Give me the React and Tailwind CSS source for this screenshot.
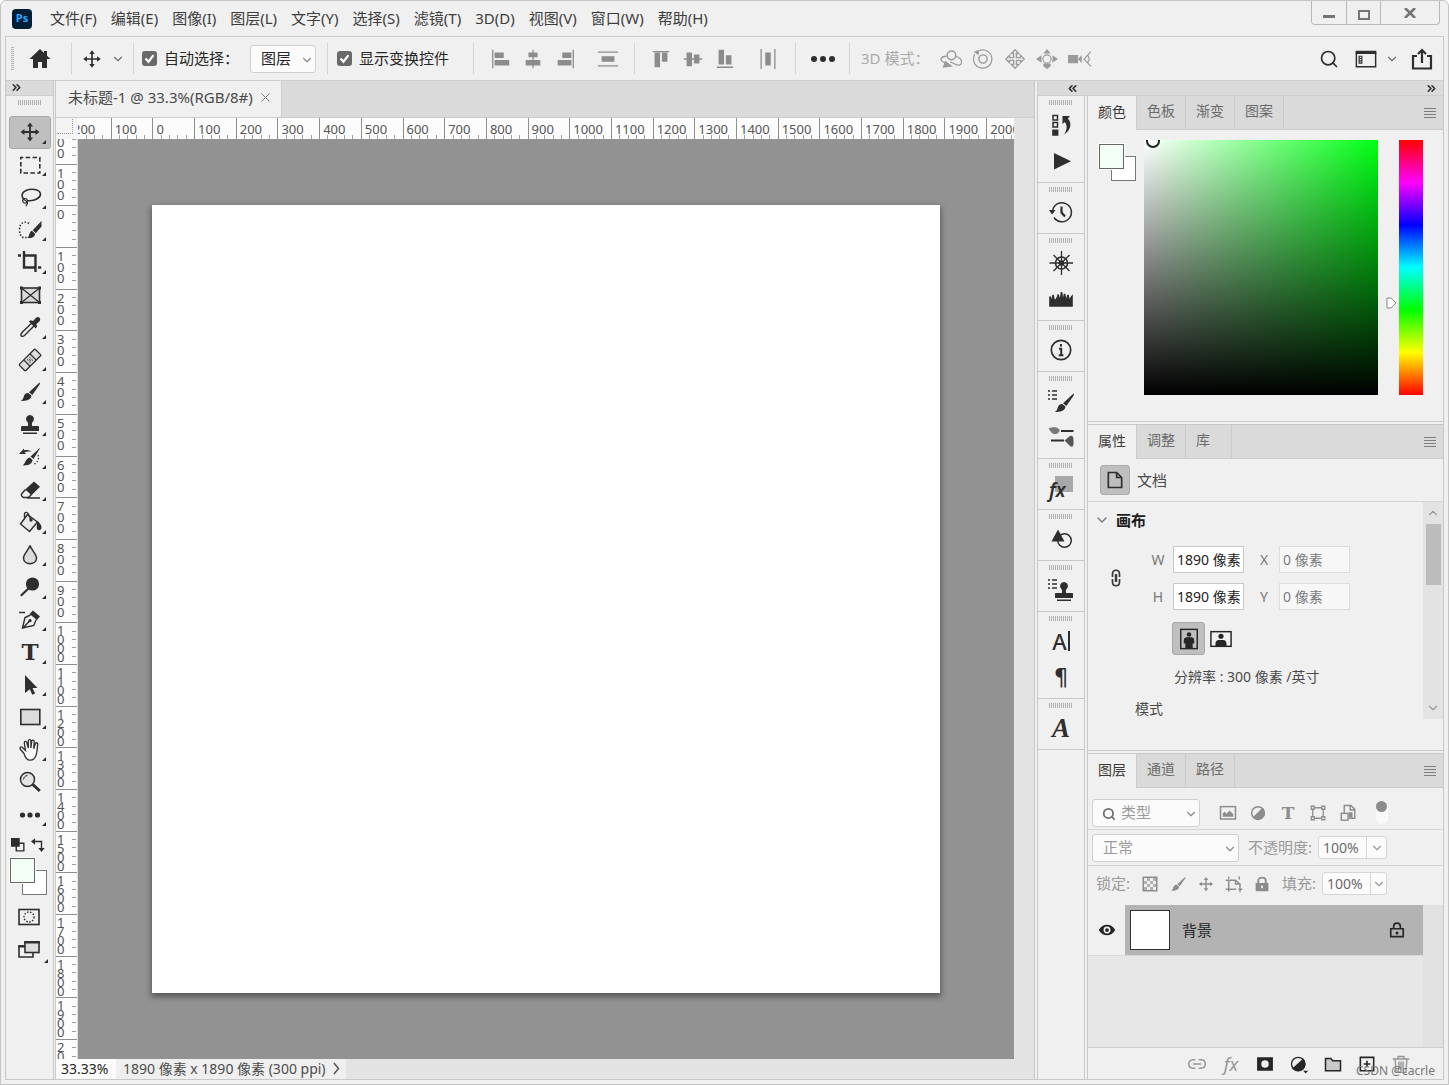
import { ChevronDown, ChevronUp, ChevronsLeft, ChevronsRight, Search } from "lucide-react";
import clsx from "clsx";

const MENUS = [
  "文件(F)", "编辑(E)", "图像(I)", "图层(L)", "文字(Y)", "选择(S)",
  "滤镜(T)", "3D(D)", "视图(V)", "窗口(W)", "帮助(H)",
];

// Size of 100 document pixels on screen at the current zoom
const UNIT = 788 / 18.9;

const range = (from, to) => {
  const out = [];
  for (let v = from; v <= to; v += 100) out.push(Math.abs(v));
  return out;
};

const Icon = ({ size = 24, className, children }) => (
  <svg
    width={size}
    height={size}
    viewBox="0 0 24 24"
    fill="none"
    stroke="currentColor"
    strokeWidth="1.6"
    className={clsx("shrink-0", className)}
    aria-hidden="true"
  >
    {children}
  </svg>
);

const MoveIcon = ({ size }) => (
  <Icon size={size}>
    <path d="M12 4v16M4 12h16" strokeWidth="1.8" />
    <path d="M12 2.5 15 6.5H9zM12 21.5l3-4H9zM2.5 12l4-3v6zM21.5 12l-4-3v6z" fill="currentColor" stroke="none" />
  </Icon>
);

const Brush = () => (
  <>
    <path d="M21.5 2.5c.8.5.3 1.500-.2 2.400L14.300 15l-3.200-2.700z" fill="currentColor" stroke="none" />
    <path d="M10.300 13l3.100 2.600c.2 3-3.300 5.800-10.600 5.400 2.900-1.500 2.300-3.400 3.600-5.900.8-1.600 2.300-2.300 3.900-2.100z" fill="currentColor" stroke="none" />
  </>
);

const Stamp = () => (
  <path
    d="M12 2a4 4 0 0 1 2.600 7c-.8.8-.9 2-.5 4H20a1 1 0 0 1 1 1v4H3v-4a1 1 0 0 1 1-1h5.900c.4-2 .3-3.200-.5-4A4 4 0 0 1 12 2zM5 19.400h14v1.700H5z"
    fill="currentColor"
    stroke="none"
  />
);

const TOOLS = [
  { name: "移动工具", icon: <MoveIcon /> },
  {
    name: "矩形选框工具",
    icon: <Icon><rect x="2.8" y="4.5" width="19" height="15.5" strokeDasharray="4.5 2.4" strokeDashoffset="2" /></Icon>,
  },
  {
    name: "套索工具",
    icon: (
      <Icon>
        <path d="M6.3 14.7C2.6 11.5 3.6 7.6 8 5.6c4.9-2.2 13-1.6 14.3 2.6 1.2 4.6-6.2 8.4-13 7.3" />
        <circle cx="7" cy="15.8" r="2.3" strokeWidth="1.2" />
        <path d="M5 14l4 2.6c1 1.3.3 3-1.3 4.4" strokeWidth="1.2" />
      </Icon>
    ),
  },
  {
    name: "快速选择工具",
    icon: (
      <Icon>
        <path d="M11 5.5C6 2.5 1.5 5 1.5 12s4.5 9.5 8 6.5" strokeDasharray="1.4 1.8" />
        <path d="M23.5 3v5.500L17.800 15.200l-3.100-3z" fill="currentColor" stroke="none" />
        <path d="M14 12.800l3.200 3.100c-.7 3.400-4 4.300-8 4.100 2.500-1.200 1.500-6 4.800-7.200z" fill="currentColor" stroke="none" />
      </Icon>
    ),
  },
  {
    name: "裁剪工具",
    icon: <Icon><path d="M0 5.5h3M6 1v16.5h11M7 5.5h10.5V22M20 17.5h3.2" strokeWidth="2.4" /></Icon>,
  },
  {
    name: "图框工具",
    flat: true,
    icon: (
      <Icon>
        <rect x="3.5" y="5" width="18" height="14.5" fill="#d9d9d9" />
        <path d="M3.5 5l18 14.5M21.5 5l-18 14.5" strokeWidth="1.3" />
        <path d="M2 3.5h3v3H2zM20 3.5h3v3h-3zM2 18h3v3H2zM20 18h3v3h-3z" fill="currentColor" stroke="none" />
      </Icon>
    ),
  },
  {
    name: "吸管工具",
    icon: (
      <Icon>
        <path d="M13.6 8.2 4 17.5c-1 1.2-1.3 2.8-.7 3.4s2.3.3 3.4-.7l9.5-9.5" strokeWidth="1.4" />
        <path d="M10.800 6.500l2-1.200 2.300.7 2.700-3c1.200-1.200 2.700-1.200 3.700-.2s1 2.600-.2 3.800l-3 2.600.8 2.300-1.300 2z" fill="currentColor" stroke="none" />
      </Icon>
    ),
  },
  {
    name: "污点修复画笔工具",
    icon: (
      <Icon>
        <g transform="rotate(-45 12 12)" strokeWidth="1.3">
          <rect x="0.8" y="7.5" width="22.5" height="9" rx="1.2" fill="#dedede" />
          <path d="M7.7 7.5v9M16.3 7.5v9" />
          <path d="M10 10.500h1M13 10.500h1M10 13.500h1M13 13.500h1M11.500 12h1" strokeWidth="1.5" />
        </g>
      </Icon>
    ),
  },
  { name: "画笔工具", icon: <Icon><Brush /></Icon> },
  { name: "仿制图章工具", icon: <Icon><Stamp /></Icon> },
  {
    name: "历史记录画笔工具",
    icon: (
      <Icon>
        <path d="M22.500 2.500L15.500 14l-3-2.400z" fill="currentColor" stroke="none" />
        <path d="M11.800 12.600l2.800 2.400c-.4 3.800-4 5.800-9.800 5.400 2.600-1.400 2.400-6.900 7-7.800z" fill="currentColor" stroke="none" />
        <path d="M1 9l5-5.500v1.700c3-.4 5.500 0 7.500 1.500-2.600-.4-4.800-.3-7 .3L8 9z" fill="currentColor" stroke="none" />
        <path d="M20 10c1.500 4-.5 7-3.500 9" strokeDasharray="1.3 1.8" strokeWidth="1.3" />
      </Icon>
    ),
  },
  {
    name: "橡皮擦工具",
    icon: (
      <Icon>
        <path d="M16 3.500l6 5.200-8.500 8.500-6.300-5.700z" fill="currentColor" stroke="none" />
        <path d="M7.500 11.500l-3.600 4c-.8 1-.8 1.900 0 2.700l1.500 1.300h5l3-3M9 20h13" strokeWidth="1.5" />
      </Icon>
    ),
  },
  {
    name: "油漆桶工具",
    icon: (
      <Icon>
        <path d="M9.5 4.5L2.5 14l9 7.5 8-9.5z" fill="#e8e8e8" strokeWidth="1.4" />
        <path d="M13 10L10 3.500C9.200 1.800 6.500 2 6.500 4v4" strokeWidth="1.4" />
        <circle cx="13" cy="10" r="1.7" fill="currentColor" stroke="none" />
        <path d="M18 10.500c1.500.5 2.500 1 3.500 2.500 1 1.200 2 2.500 2 4.500 0 3.500-4.800 3.500-4.800.3 0-2 .8-4-.7-7.300z" fill="currentColor" stroke="none" />
      </Icon>
    ),
  },
  {
    name: "模糊工具",
    icon: <Icon><path d="M12 2.5c1 4 6.500 8.500 6.500 12.500 0 7.500-13 7.500-13 0 0-4 5.500-8.500 6.500-12.500z" fill="#dcdcdc" strokeWidth="1.5" /></Icon>,
  },
  {
    name: "减淡工具",
    icon: (
      <Icon>
        <circle cx="14.5" cy="9" r="6.6" fill="currentColor" stroke="none" />
        <path d="M10.5 13.5L2.8 20.8" strokeWidth="2.2" />
      </Icon>
    ),
  },
  {
    name: "钢笔工具",
    icon: (
      <Icon>
        <path d="M15 2.5l7 6-3 3.500-7.500-6z" fill="currentColor" stroke="none" />
        <path d="M12.5 7L7 9.500 4.500 20l11.300-2.500 2.400-6M5 20l6.500-7" strokeWidth="1.4" />
        <circle cx="12" cy="12.7" r="1.6" fill="currentColor" stroke="none" />
        <path d="M1 4.5h6" strokeWidth="1.4" />
      </Icon>
    ),
  },
  {
    name: "横排文字工具",
    icon: <span className="w-6 pl-px text-center font-['DejaVu_Serif','Noto_Sans',serif] text-[23px] leading-6 font-bold">T</span>,
  },
  {
    name: "路径选择工具",
    icon: <Icon><path d="M7 2l12.5 13h-5l2.600 5.500-2.800 1.300-2.500-5.500L7 20z" fill="currentColor" stroke="none" /></Icon>,
  },
  {
    name: "矩形工具",
    icon: <Icon><rect x="2.8" y="4.5" width="19" height="15" fill="#dcdcdc" /></Icon>,
  },
  {
    name: "抓手工具",
    icon: (
      <Icon>
        <path
          d="M5 15.500L1.200 11c-1-1.500.8-2.800 2-1.700L6.500 12.500 5.300 5c-.2-1.900 2.100-2.100 2.500-.5L9.300 10V3c0-1.800 2.600-1.800 2.600 0v7l.8-6.700c.3-1.700 2.600-1.300 2.500.4l-.5 7 1.700-5c.6-1.600 2.700-.9 2.400.7-.7 3.500-.5 6.600-1.500 10-1 4-3 5.800-6.300 5.800-4 0-5-3.500-6-6.700z"
          fill="#f8f8f8"
          strokeWidth="1.3"
          transform="translate(1 0)"
        />
      </Icon>
    ),
  },
  {
    name: "缩放工具",
    flat: true,
    icon: (
      <Icon>
        <circle cx="9.5" cy="9.5" r="7" strokeWidth="1.5" fill="#e4e4e4" />
        <path d="M5.5 9.5c0-2 1.800-4 4-4" strokeWidth="1" />
        <path d="M14.8 14.5l7 6.500" strokeWidth="3" />
      </Icon>
    ),
  },
  {
    name: "编辑工具栏",
    icon: (
      <Icon>
        <g fill="currentColor" stroke="none">
          <circle cx="4.5" cy="12" r="2.6" /><circle cx="12" cy="12" r="2.6" /><circle cx="19.5" cy="12" r="2.6" />
        </g>
      </Icon>
    ),
  },
];

const ListDots = () => (
  <path d="M-1 2h2M-1 6h2M-1 10h2M3 2h5M3 6h5M3 10h5" strokeWidth="1.5" />
);

const DOCK_GROUPS = [
  [
    {
      name: "历史记录",
      icon: (
        <Icon>
          <path d="M4 2.5h4.500V7H4zM4 9.500h4.500V14H4z" strokeWidth="1.5" />
          <path d="M3.200 16.500h6.200v6.200H3.200zM13.500 3h7.500l-2.200 2.600c4.500 4.400 3.200 12-3.800 15.900 3.200-4.500 3.500-9 .8-12.500L13.500 11z" fill="currentColor" stroke="none" />
        </Icon>
      ),
    },
    { name: "动作", icon: <Icon><path d="M5 4l17 8.2L5 20.500z" fill="currentColor" stroke="none" /></Icon> },
  ],
  [
    {
      name: "版本历史记录",
      icon: (
        <Icon className="overflow-visible">
          <path d="M3.5 11A9.500 9.500 0 1 1 5 17.500" strokeWidth="1.5" />
          <path d="M0 10h6.500L3 14.500z" fill="currentColor" stroke="none" />
          <path d="M12.500 6.500v6l3.500 4" strokeWidth="2.2" />
        </Icon>
      ),
    },
  ],
  [
    {
      name: "导航器",
      icon: (
        <Icon>
          <circle cx="12.500" cy="12" r="6" /><circle cx="12.500" cy="12" r="2" fill="currentColor" />
          <path d="M12.500 0v24M.5 12h24M4.500 4l16 16M20.500 4l-16 16" strokeWidth="1.3" />
        </Icon>
      ),
    },
    {
      name: "直方图",
      icon: (
        <Icon>
          <path d="M1 19V9.500l1.200 4h1L4 8l1 5h2l1-2 1 2V7.500l1.500 5h1L12.500 5l1 7.500h1l1-5.500 1.300 6h1L19 8l.8 5h1l1-2 1.200-1.500V19z" fill="currentColor" />
        </Icon>
      ),
    },
  ],
  [
    {
      name: "信息",
      icon: (
        <Icon>
          <circle cx="12" cy="12" r="9.7" strokeWidth="1.7" />
          <path d="M12 6v2.600M10 10.800h2.200v6.500M9.800 17.300h4.600" strokeWidth="2" />
        </Icon>
      ),
    },
  ],
  [
    { name: "画笔设置", icon: <Icon className="overflow-visible"><ListDots /><g transform="translate(3 2)"><Brush /></g></Icon> },
    {
      name: "画笔",
      icon: (
        <Icon className="overflow-visible">
          <path d="M-.5 3.500c5-2.500 11-1 11 2s-5 5-8 2z" fill="#777" stroke="none" />
          <path d="M12 6h12.500M2 15.500h13" strokeWidth="2.2" />
          <path d="M15.500 15.500L21 11c3-1 3.500 1 3.500 5s0 7-3.500 5z" fill="#555" stroke="none" />
        </Icon>
      ),
    },
  ],
  [
    {
      name: "样式",
      icon: (
        <span className="flex h-7 w-6 items-end bg-[linear-gradient(#a8a8a8,#a8a8a8)] bg-[length:18px_16px] bg-[position:6px_2px] bg-no-repeat font-['Noto_Sans',sans-serif] text-[19px] leading-6 font-semibold italic">
          fx
        </span>
      ),
    },
  ],
  [
    {
      name: "形状",
      icon: (
        <Icon>
          <circle cx="15.500" cy="13.500" r="6.800" strokeWidth="1.5" />
          <path d="M9 2.500l6.500 12H2.500z" fill="currentColor" stroke="none" />
        </Icon>
      ),
    },
  ],
  [{ name: "仿制源", icon: <Icon className="overflow-visible"><ListDots /><g transform="translate(3 2)"><Stamp /></g></Icon> }],
  [
    {
      name: "字符",
      icon: <span className="border-r-2 border-[#2e2e2e] pr-px font-['Noto_Sans',sans-serif] text-[22px] leading-5 font-medium">A</span>,
    },
    { name: "段落", icon: <span className="font-['DejaVu_Sans',sans-serif] text-[23px] leading-6">¶</span> },
  ],
  [{ name: "字形", icon: <span className="font-['Liberation_Serif',serif] text-[27px] leading-7 font-bold italic">A</span> }],
];

const ALIGN_H = [
  { name: "左对齐", d: "M5 5h10v6H5zM5 13h16v6H5z", line: "M3 2v20" },
  { name: "水平居中对齐", d: "M7 5h10v5H7zM4 13h16v6H4z", line: "M12 2v20" },
  { name: "右对齐", d: "M9 5h10v6H9zM4 13h15v6H4z", line: "M21 2v20" },
];

const ALIGN_V = [
  { name: "顶对齐", d: "M5 5h6v16H5zM13 5h6v10h-6z", line: "M3 4h18" },
  { name: "垂直居中对齐", d: "M5 5h6v15H5zM13 7h6v10h-6z", line: "M2 12h20" },
  { name: "底对齐", d: "M5 2h6v16H5zM13 8h6v10h-6z", line: "M3 21h18" },
];

const AlignButton = ({ name, d, line }) => (
  <button aria-label={name} className="flex w-8 justify-center text-[#8c8c8c]">
    <Icon size={22}>
      <path d={d} fill="currentColor" stroke="none" />
      <path d={line} strokeWidth="1.4" />
    </Icon>
  </button>
);

const MODES_3D = [
  {
    name: "旋转 3D 对象",
    icon: (
      <Icon>
        <path d="M7 9c-6 0-7.500 4-4 6 1.500 1 3 1.500 5 1.800M17.500 9c4 1.500 6.500 4.500 6 7.500-.5 2.500-3.500 3-7.500 1l-5-2.500" strokeWidth="1.4" />
        <circle cx="12.500" cy="8" r="4.700" fill="#f0f0f0" />
        <path d="M6 15l6 4.500-8 1z" fill="currentColor" />
      </Icon>
    ),
  },
  {
    name: "滚动 3D 对象",
    icon: (
      <Icon>
        <circle cx="12" cy="12" r="4.5" />
        <path d="M3 7a10 10 0 1 0 5-4.300" strokeWidth="1.3" />
        <path d="M2 4l6-2-1 6z" fill="currentColor" stroke="none" />
      </Icon>
    ),
  },
  {
    name: "拖动 3D 对象",
    icon: (
      <Icon>
        <path d="M12 2l4 4h-2.500v4.500H18V8l4 4-4 4v-2.500h-4.500V18H16l-4 4-4-4h2.500v-4.500H6V16l-4-4 4-4v2.500h4.500V6H8z" strokeWidth="1.5" />
      </Icon>
    ),
  },
  {
    name: "滑动 3D 对象",
    icon: (
      <Icon>
        <circle cx="12" cy="12" r="4.5" strokeWidth="1.3" />
        <path d="M12 1l4 5H8zM8 17h8v3l-4 3-4-3zM0 12l6-4v8zM24 12l-6-4v8z" fill="currentColor" stroke="none" />
      </Icon>
    ),
  },
  {
    name: "变焦 3D 相机",
    icon: (
      <Icon className="overflow-visible">
        <path d="M0 7.500h11v9H0zM11 12l4-4.500v9z" fill="currentColor" stroke="none" />
        <path d="M25 4l-7.500 8 7.500 8M21.500 8c2 2 2 6 0 8" strokeWidth="1.3" />
      </Icon>
    ),
  },
];

const Divider = ({ className }) => <div className={clsx("h-[31px] w-px shrink-0 bg-[#d4d4d4]", className)} />;

const Select = ({ label, className, selectClass, children }) => (
  <div className={clsx("relative", className)}>
    <select
      aria-label={label}
      className={clsx("h-7 w-full appearance-none rounded-[3px] border border-[#d0d0d0] bg-[#fbfbfb] pr-5 text-[15px] outline-none", selectClass)}
    >
      {children}
    </select>
    <ChevronDown size={14} strokeWidth={2} className="pointer-events-none absolute top-2 right-[2px] text-[#8a8a8a]" />
  </div>
);

const Checkbox = ({ id, label }) => (
  <>
    <span className="relative flex h-[15px] w-[15px] shrink-0">
      <input id={id} type="checkbox" defaultChecked className="h-[15px] w-[15px] appearance-none rounded-[3px] bg-[#7a7a7a] checked:bg-[#696969]" />
      <svg viewBox="0 0 15 15" className="pointer-events-none absolute inset-0" fill="none" stroke="#fff" strokeWidth="2.2" aria-hidden="true">
        <path d="M3.5 7.5l3 3.2 5-6.5" />
      </svg>
    </span>
    <label htmlFor={id} className="ml-[7px] text-[15px] whitespace-nowrap text-[#262626]">{label}</label>
  </>
);

const TitleBar = () => (
  <header className="flex h-[35px] shrink-0 items-center pl-[7px]">
    <div className="flex h-5 w-5 items-center justify-center rounded-[4px] bg-[#001e36] font-['Noto_Sans',sans-serif] text-[11px] font-bold text-[#31a8ff]">
      Ps
    </div>
    <nav className="ml-[18px] flex gap-[14px] pb-px text-[15px] text-[#3c3c3c]">
      {MENUS.map((menu) => (
        <button key={menu} className="whitespace-nowrap">{menu}</button>
      ))}
    </nav>
    <div className="mr-1 ml-auto flex h-6 self-start rounded-b-[4px] border border-t-0 border-[#b9b9b9] text-[#757575]">
      <button aria-label="最小化" className="flex w-[34px] items-center justify-center">
        <span className="mt-2 h-[3px] w-3 bg-[#757575]" />
      </button>
      <button aria-label="最大化" className="flex w-[35px] items-center justify-center border-x border-[#b9b9b9]">
        <span className="mt-1 h-[10px] w-3 border-2 border-[#757575]" />
      </button>
      <button aria-label="关闭" className="flex w-[58px] items-center justify-center">
        <svg width="12" height="10" viewBox="0 0 12 10" stroke="currentColor" strokeWidth="2.6" aria-hidden="true">
          <path d="M1 0l10 10M11 0L1 10" />
        </svg>
      </button>
    </div>
  </header>
);

const OptionsBar = () => (
  <div className="flex h-[45px] shrink-0 items-center border-y border-[#cdcdcd] text-[#2e2e2e]">
    <div className="ml-[5px] h-6 w-[3px] bg-[repeating-linear-gradient(#b5b5b5_0_1px,transparent_1px_2px)]" />
    <button aria-label="主页" className="ml-[10px] flex w-8 justify-center">
      <Icon>
        <path d="M12 2L1.500 12H5v9h5v-6h4v6h5v-9h3.500L19 8.700V4h-3v2z" fill="currentColor" stroke="none" />
      </Icon>
    </button>
    <Divider className="ml-[15px]" />
    <button aria-label="移动工具预设" className="ml-1 flex items-center">
      <span className="flex w-8 justify-center"><MoveIcon size={22} /></span>
      <ChevronDown size={14} strokeWidth={2} className="ml-[3px] text-[#6e6e6e]" />
    </button>
    <Divider className="ml-2" />
    <div className="flex w-[116px] shrink-0 items-center pl-2">
      <Checkbox id="auto-select" label="自动选择：" />
    </div>
    <Select label="自动选择对象" className="w-[66px]" selectClass="pl-[10px] text-[#262626]">
      <option>图层</option>
      <option>组</option>
    </Select>
    <Divider className="ml-[11px]" />
    <div className="flex w-[145px] shrink-0 items-center pl-[9px]">
      <Checkbox id="show-transform" label="显示变换控件" />
    </div>
    <Divider />
    <div className="ml-[11px] flex">
      {ALIGN_H.map((item) => <AlignButton key={item.name} {...item} />)}
    </div>
    <div className="mr-[10px] ml-[11px] flex">
      <AlignButton name="垂直分布" d="M5 9h14v6H5z" line="M1 4.500h22M1 19.500h22" />
    </div>
    <Divider />
    <div className="ml-[10px] flex">
      {ALIGN_V.map((item) => <AlignButton key={item.name} {...item} />)}
    </div>
    <div className="mr-[11px] ml-[11px] flex">
      <AlignButton name="水平分布" d="M9 5h6v14H9z" line="M4.500 1v22M19.500 1v22" />
    </div>
    <Divider />
    <button aria-label="更多选项" className="flex w-[53px] justify-center gap-[3px]">
      <span className="h-[6px] w-[6px] rounded-full bg-[#2e2e2e]" />
      <span className="h-[6px] w-[6px] rounded-full bg-[#2e2e2e]" />
      <span className="h-[6px] w-[6px] rounded-full bg-[#2e2e2e]" />
    </button>
    <Divider />
    <span className="ml-[11px] w-[74px] text-[15px] whitespace-nowrap text-[#a9a9a9]">3D 模式：</span>
    <div className="flex text-[#9a9a9a]">
      {MODES_3D.map((mode) => (
        <button key={mode.name} aria-label={mode.name} className="flex w-8 justify-center">
          <span className="flex [&>svg]:h-[22px] [&>svg]:w-[22px]">{mode.icon}</span>
        </button>
      ))}
    </div>
    <div className="mr-[9px] ml-auto flex items-center">
      <button aria-label="搜索" className="mr-4"><Search size={20} strokeWidth={2} /></button>
      <button aria-label="选择工作区" className="mr-[11px] flex items-center gap-2">
        <Icon size={22}>
          <path d="M1.500 5v15.500h21V5" />
          <path d="M.7 3h22.600v3.500H.7z" fill="currentColor" stroke="none" />
          <path d="M4.500 9h3v2.500h-3zM4.500 11.500h3V14h-3zM4.500 14h3v2.500h-3z" strokeWidth="1.2" />
        </Icon>
        <ChevronDown size={14} strokeWidth={2} className="text-[#6e6e6e]" />
      </button>
      <button aria-label="共享图像">
        <Icon><path d="M7 9H3v12.500h18V9h-4M12 16V3.500M8 7l4-4 4 4" strokeWidth="2.2" /></Icon>
      </button>
    </div>
  </div>
);

const Swatches = () => (
  <div className="relative h-[37px] w-[37px]">
    <button aria-label="背景色" className="absolute right-0 bottom-0 h-[25px] w-[25px] border border-[#777] bg-white" />
    <button aria-label="前景色" className="absolute top-0 left-0 h-[25px] w-[25px] border border-[#666] bg-[#f3fff4] outline outline-1 outline-white" />
  </div>
);

const Grip = () => (
  <div className="mx-auto h-[5px] w-6 bg-[repeating-linear-gradient(to_right,#b0b0b0_0_1px,transparent_1px_2px)]" />
);

const Corner = () => (
  <span className="absolute right-1 bottom-1 border-4 border-t-0 border-r-0 border-b-[#2e2e2e] border-l-transparent" />
);

const Toolbar = () => (
  <aside className="flex w-[48px] shrink-0 flex-col border-r border-[#c8c8c8] text-[#2e2e2e]">
    <div className="h-[15px] border-b border-[#cdcdcd] bg-[#dbdbdb] pl-1">
      <ChevronsRight size={13} strokeWidth={3} />
    </div>
    <div className="pt-1"><Grip /></div>
    <div className="mt-[11px] flex h-[715px] flex-col items-center">
      {TOOLS.map((tool, i) => (
        <button
          key={tool.name}
          aria-label={tool.name}
          className={clsx(
            "relative flex w-[42px] flex-1 items-center justify-center rounded-[3px] border",
            i === 0 ? "border-[#a8a8a8] bg-[#bfbfbf]" : "border-transparent"
          )}
        >
          {tool.icon}
          {!tool.flat && <Corner />}
        </button>
      ))}
    </div>
    <div className="mt-[7px] flex justify-between pr-2 pl-[5px]">
      <button aria-label="默认前景色和背景色">
        <Icon size={14}>
          <path d="M9 9h13v13H9z" strokeWidth="2.4" />
          <path d="M0 0h15v15H0z" fill="currentColor" stroke="none" />
        </Icon>
      </button>
      <button aria-label="切换前景色和背景色">
        <Icon size={14}>
          <path d="M5 6h13v13" strokeWidth="2.4" />
          <path d="M0 6l7-5.500v11zM18 24l-5.500-7h11z" fill="currentColor" stroke="none" />
        </Icon>
      </button>
    </div>
    <div className="mt-[6px] ml-1"><Swatches /></div>
    <button aria-label="以快速蒙版模式编辑" className="mt-[10px] flex h-6 w-[46px] items-center justify-center">
      <Icon>
        <rect x="2" y="4.500" width="20" height="15" />
        <circle cx="12" cy="12" r="5" strokeDasharray="1.5 1.5" strokeWidth="1.4" />
      </Icon>
    </button>
    <button aria-label="更改屏幕模式" className="relative mt-2 flex h-[26px] w-[42px] items-center justify-center pl-1">
      <Icon>
        <path d="M8 8H2v11h14v-4" />
        <rect x="8" y="4" width="14" height="10.500" fill="#dedede" />
        <path d="M7.200 3h15.600v2.500H7.200zM1.200 7.200H8v2.300H1.200z" fill="currentColor" stroke="none" />
      </Icon>
      <span className="absolute right-0 bottom-0 border-4 border-t-0 border-r-0 border-b-[#2e2e2e] border-l-transparent" />
    </button>
  </aside>
);

const HorizontalRuler = () => (
  <div className="ml-[-9px] flex h-full">
    {range(-200, 2000).map((value, i) => (
      <div key={i} className="relative h-full shrink-0 border-l border-[#8f8f8f]" style={{ width: UNIT }}>
        <div className="flex h-full items-end justify-evenly">
          {[0, 1, 2, 3].map((n) => <span key={n} className="h-1 w-px bg-[#a0a0a0]" />)}
        </div>
        <span className="absolute top-[2px] left-[3px] text-[13px] leading-[18px] text-[#555]">{value}</span>
      </div>
    ))}
  </div>
);

const VerticalRuler = () => (
  <div className="mt-[-17px] flex flex-col">
    {range(-200, 2000).map((value, i) => (
      <div key={i} className="relative shrink-0 border-t border-[#8f8f8f]" style={{ height: UNIT }}>
        <div className="flex h-full flex-col items-end justify-evenly pr-px">
          {[0, 1, 2, 3].map((n) => <span key={n} className="h-px w-1 bg-[#a0a0a0]" />)}
        </div>
        <span
          className={clsx(
            "absolute top-[3px] left-px w-2 text-[13px] break-all text-[#555]",
            value >= 1000 ? "leading-[9px]" : "leading-[11px]"
          )}
        >
          {value}
        </span>
      </div>
    ))}
  </div>
);

const DocumentWindow = () => (
  <main className="ml-px flex min-w-0 flex-1 flex-col border-x border-[#c8c8c8]">
    <div className="flex h-[37px] shrink-0 border-b border-[#cdcdcd] bg-[#dadada]">
      <div className="flex w-[226px] items-center gap-2 border-r border-[#cdcdcd] bg-[#f0f0f0] pb-[3px] pl-3 text-[15px] text-[#4a4a4a]">
        <span className="whitespace-nowrap">未标题-1 @ 33.3%(RGB/8#)</span>
        <button aria-label="关闭文档">
          <svg width="9" height="9" viewBox="0 0 9 9" stroke="#777" aria-hidden="true"><path d="M.5.5l8 8M8.500.500l-8 8" /></svg>
        </button>
      </div>
    </div>
    <div className="flex min-h-0 flex-1">
      <div className="flex min-w-0 flex-1 flex-col">
        <div className="flex h-[21px] shrink-0 bg-[#fcfcfc]">
          <div className="w-[22px] shrink-0 bg-[#f4f4f4] p-px pr-[5px] pb-[5px]">
            <div className="h-full w-full border-r border-b border-dotted border-[#999]" />
          </div>
          <div className="min-w-0 flex-1 overflow-hidden"><HorizontalRuler /></div>
        </div>
        <div className="flex min-h-0 flex-1">
          <div className="w-[22px] shrink-0 overflow-hidden border-r border-[#ddd] bg-[#fcfcfc]"><VerticalRuler /></div>
          <div className="flex min-w-0 flex-1 items-center justify-center overflow-hidden bg-[#929292]">
            <div className="aspect-square w-[788px] shrink-0 bg-white shadow-[0_3px_6px_1px_rgba(0,0,0,0.4)]" />
          </div>
        </div>
      </div>
      <div className="w-5 shrink-0 bg-[#e3e3e3]" />
    </div>
    <footer className="flex h-5 shrink-0 items-center bg-[#e3e3e3] text-[14px]">
      <span className="w-[60px] bg-[#fbfbfb] pb-px pl-[5px] leading-[19px] text-[#262626]">33.33%</span>
      <button className="flex h-full w-[230px] items-center justify-between bg-[#efefef] pr-[6px] pb-px pl-[7px] whitespace-nowrap text-[#4c4c4c]">
        <span>1890 像素 x 1890 像素 (300 ppi)</span>
        <svg width="7" height="13" viewBox="0 0 7 13" fill="none" stroke="#555" strokeWidth="1.5" aria-hidden="true"><path d="M1 1l4.500 5.500L1 12" /></svg>
      </button>
    </footer>
  </main>
);

const Dock = () => (
  <aside className="flex w-[48px] shrink-0 flex-col border-x border-[#c8c8c8] text-[#2e2e2e]">
    {DOCK_GROUPS.map((group, i) => (
      <div key={i} className="flex flex-col gap-px border-b border-[#c8c8c8] pt-1 pb-1">
        <div className="h-[6px]"><Grip /></div>
        {group.map((item) => (
          <button key={item.name} aria-label={item.name} className="flex h-[35px] w-full items-center justify-center">
            {item.icon}
          </button>
        ))}
      </div>
    ))}
  </aside>
);

const PanelTabs = ({ tabs }) => (
  <div className="flex h-[34px] shrink-0 bg-[#dadada] text-[14px]" role="tablist">
    {tabs.map((tab, i) => (
      <button
        key={tab}
        role="tab"
        aria-selected={i === 0}
        className={clsx(
          "min-w-[46px] border-r border-[#cbcbcb] px-[10px] pb-1 text-left",
          i === 0 ? "bg-[#f0f0f0] text-[#3a3a3a]" : "border-b text-[#6a6a6a]"
        )}
      >
        {tab}
      </button>
    ))}
    <div className="flex flex-1 items-center justify-end border-b border-[#cbcbcb] pr-[7px]">
      <button aria-label="面板菜单" className="flex flex-col gap-[2px]">
        {[0, 1, 2, 3].map((n) => <span key={n} className="h-px w-3 bg-[#7d7d7d]" />)}
      </button>
    </div>
  </div>
);

const ColorPanel = () => (
  <section className="flex h-[326px] shrink-0 flex-col border-b border-[#c8c8c8]">
    <PanelTabs tabs={["颜色", "色板", "渐变", "图案"]} />
    <div className="flex items-start pt-[10px] pr-5 pl-[11px]">
      <div className="mt-[4px]"><Swatches /></div>
      <div className="ml-2 h-[255px] flex-1 overflow-hidden bg-[linear-gradient(to_top,#000,transparent),linear-gradient(to_right,#fff,#00ff14)]">
        <div className="mt-[-6px] ml-[2px] h-[14px] w-[14px] rounded-full border-2 border-[#222]" />
      </div>
      <div className="relative ml-[21px] h-[255px] w-6 bg-[linear-gradient(#f00,#f0f,#00f,#0ff,#0f0,#ff0,#f00)]">
        <svg width="11" height="12" viewBox="0 0 11 12" className="absolute top-[157px] left-[-13px]" fill="#fff" stroke="#888" aria-hidden="true">
          <path d="M1 1h4l5 5-5 5H1z" />
        </svg>
      </div>
    </div>
  </section>
);

const SizeField = ({ label, value, disabled }) => (
  <div className="flex items-center">
    <label htmlFor={`field-${label}`} className="w-4 text-center text-[14px] text-[#777]">{label}</label>
    <input
      id={`field-${label}`}
      defaultValue={value}
      disabled={disabled}
      className={clsx(
        "ml-[7px] h-[27px] w-[71px] border px-[3px] pb-px text-[14px]",
        disabled ? "border-[#dcdcdc] bg-[#f7f7f7] text-[#7b7b7b]" : "border-[#c8c8c8] bg-white text-[#222]"
      )}
    />
  </div>
);

const Person = () => (
  <>
    <circle cx="12" cy="7" r="2.500" fill="currentColor" stroke="none" />
    <path d="M6.300 13.500c0-2.300 1.500-3.500 3.200-3.500h5c1.700 0 3.200 1.200 3.200 3.500V17H16v5H8v-5H6.300z" fill="currentColor" stroke="none" />
  </>
);

const PropertiesPanel = () => (
  <section className="mt-[2px] flex h-[327px] shrink-0 flex-col border-y border-[#c8c8c8]">
    <PanelTabs tabs={["属性", "调整", "库"]} />
    <div className="flex h-[43px] shrink-0 items-center border-b border-[#d4d4d4] pl-3 text-[15px] text-[#4a4a4a]">
      <span className="mr-[7px] flex h-[30px] w-[30px] items-center justify-center rounded-[3px] border border-[#aaa] bg-[#bfbfbf] text-[#2e2e2e]">
        <Icon size={20}><path d="M4 3h10l6 6v12H4zM14 3v6h6" strokeWidth="2" /></Icon>
      </span>
      文档
    </div>
    <div className="flex h-[217px]">
      <div className="flex-1 text-[#4a4a4a]">
        <h3 className="flex h-9 items-center text-[15px] font-bold text-[#1c1c1c]">
          <ChevronDown size={16} strokeWidth={2} className="mr-[6px] ml-[6px] text-[#777]" />
          画布
        </h3>
        <div className="mt-2 flex items-center pl-5">
          <button aria-label="链接宽度和高度" className="mr-[26px]">
            <svg width="16" height="18" viewBox="0 0 16 18" fill="none" stroke="#3a3a3a" strokeWidth="1.700" aria-hidden="true">
              <path d="M4.500 8V5c0-5 7-5 7 0v3M4.500 10v3c0 5 7 5 7 0v-3" />
              <path d="M8 5v8" strokeWidth="2.4" />
            </svg>
          </button>
          <div className="grid grid-cols-2 gap-x-3 gap-y-[10px]">
            <SizeField label="W" value="1890 像素" />
            <SizeField label="X" value="0 像素" disabled />
            <SizeField label="H" value="1890 像素" />
            <SizeField label="Y" value="0 像素" disabled />
          </div>
        </div>
        <div className="mt-3 flex items-center gap-[5px] pl-[84px] text-[#262626]">
          <button aria-label="纵向" className="flex h-[33px] w-[33px] items-center justify-center rounded-[3px] border border-[#a8a8a8] bg-[#bfbfbf]">
            <Icon size={22}><rect x="3" y="1.500" width="18" height="21" /><Person /></Icon>
          </button>
          <button aria-label="横向">
            <Icon size={22}>
              <rect x="1" y="4" width="22" height="16" />
              <circle cx="12" cy="9" r="2.800" fill="currentColor" stroke="none" />
              <path d="M6 20v-3c0-2.500 1.500-4 3.500-4h5c2 0 3.500 1.500 3.500 4v3z" fill="currentColor" stroke="none" />
            </Icon>
          </button>
        </div>
        <p className="mt-3 pl-[86px] text-[14px] leading-5">分辨率 : 300 像素 /英寸</p>
        <p className="mt-3 pl-[47px] text-[14px] leading-5">模式</p>
      </div>
      <div className="flex w-5 flex-col items-center bg-[#e3e3e3] text-[#9a9a9a]">
        <ChevronUp size={14} strokeWidth={2} className="my-1" />
        <div className="h-[61px] w-[15px] bg-[#bcbcbc]" />
        <ChevronDown size={14} strokeWidth={2} className="mt-auto mb-1" />
      </div>
    </div>
  </section>
);

const FILTERS = [
  {
    name: "像素图层",
    icon: <Icon size={18}><rect x="2" y="3.500" width="20" height="16.500" strokeWidth="2" /><path d="M5 17v-4l2.500-3 2.500 3 4-4.500 5 5V17z" fill="currentColor" stroke="none" /></Icon>,
  },
  {
    name: "调整图层",
    icon: <Icon size={18}><circle cx="12" cy="12" r="8.500" strokeWidth="2" /><path d="M18 6A8.500 8.500 0 0 1 6 18z" fill="currentColor" /></Icon>,
  },
  { name: "文字图层", icon: <span className="font-['DejaVu_Serif','Noto_Sans',serif] text-[17px] leading-[18px] font-bold">T</span> },
  {
    name: "形状图层",
    icon: <Icon size={18}><path d="M5 7v10M19 7v10M7 5h10M7 19h10M3 3h4v4H3zM17 3h4v4h-4zM3 17h4v4H3zM17 17h4v4h-4z" strokeWidth="1.700" /></Icon>,
  },
  {
    name: "智能对象",
    icon: <Icon size={18}><path d="M7 12V2h9l5 5v12h-8M15 2v6h6" strokeWidth="1.9" /><rect x="3" y="12.500" width="9" height="9" strokeWidth="1.9" /><path d="M13 11h5v7h-5z" fill="currentColor" stroke="none" /></Icon>,
  },
];

const LOCKS = [
  {
    name: "锁定透明像素",
    icon: <Icon size={18}><rect x="3" y="3" width="18" height="18" strokeWidth="2" /><path d="M8 4h4v4H8zM16 4h4v4h-4zM4 8h4v4H4zM12 8h4v4h-4zM8 12h4v4H8zM16 12h4v4h-4zM4 16h4v4H4zM12 16h4v4h-4z" fill="#b0b0b0" stroke="none" /></Icon>,
  },
  { name: "锁定图像像素", icon: <Icon size={18}><Brush /></Icon> },
  { name: "锁定位置", icon: <MoveIcon size={18} /> },
  {
    name: "防止在画板内外自动嵌套",
    icon: <Icon size={18}><path d="M5 2v3M5 8v14M1 7h13l6 5v11M1 19h14M18 19h5M19 2v4M14 7v5h6" strokeWidth="1.9" /></Icon>,
  },
  {
    name: "锁定全部",
    icon: <Icon size={18}><path d="M7 11V8c0-6 10-6 10 0v3" strokeWidth="2.6" /><path d="M3.500 10.500h17v11h-17zM10.800 14v3.500h2.400V14z" fill="currentColor" fillRule="evenodd" stroke="none" /></Icon>,
  },
];

const PercentField = ({ id, label }) => (
  <>
    <label htmlFor={id} className="ml-auto text-[15px] whitespace-nowrap text-[#9a9a9a]">{label}</label>
    <div className="flex h-[23px] w-[69px] rounded-[3px] border border-[#d6d6d6] bg-[#fbfbfb]">
      <input id={id} defaultValue="100%" className="w-12 border-r border-[#d6d6d6] bg-transparent pl-1 text-[14px] text-[#6b6b6b] outline-none" />
      <button aria-label="展开滑块" className="flex flex-1 items-center justify-center text-[#9a9a9a]">
        <ChevronDown size={14} strokeWidth={2} />
      </button>
    </div>
  </>
);

const LAYER_ACTIONS = [
  {
    name: "链接图层",
    muted: true,
    icon: <Icon size={20}><path d="M10 7H7c-6.500 0-6.500 10 0 10h3M14 7h3c6.500 0 6.500 10 0 10h-3M7 12h10" strokeWidth="1.8" /></Icon>,
  },
  { name: "添加图层样式", muted: true, icon: <span className="font-['Noto_Sans',sans-serif] text-[18px] leading-5 italic">fx</span> },
  {
    name: "添加图层蒙版",
    icon: <Icon size={20}><path d="M2.500 4h19v16h-19zM12 7.500a4.500 4.500 0 1 0 0 9 4.500 4.500 0 0 0 0-9z" fill="currentColor" fillRule="evenodd" stroke="none" /></Icon>,
  },
  {
    name: "创建新的填充或调整图层",
    icon: <Icon size={20}><circle cx="11" cy="12" r="8" /><path d="M17 6.500A8 8 0 0 1 5 17.500z" fill="currentColor" /><path d="M17 20h6l-3 3.500z" fill="currentColor" stroke="none" /></Icon>,
  },
  {
    name: "创建新组",
    icon: <Icon size={20}><path d="M3 5.500h6.500l2 2.500H21v12H3z" fill="#c9c9c9" strokeWidth="1.8" /></Icon>,
  },
  {
    name: "创建新图层",
    icon: <Icon size={20}><path d="M4 4h16v16H4zM12 8v8M8 12h8" strokeWidth="1.9" /></Icon>,
  },
  {
    name: "删除图层",
    muted: true,
    icon: <Icon size={20}><path d="M2 6h20M8.500 6V3h7v3M5 6l1 16h12l1-16M9.500 9v10M12 9v10M14.500 9v10" strokeWidth="1.700" /></Icon>,
  },
];

const LayersPanel = () => (
  <section className="mt-[2px] flex min-h-0 flex-1 flex-col border-t border-[#c8c8c8]">
    <PanelTabs tabs={["图层", "通道", "路径"]} />
    <div className="flex h-[42px] shrink-0 items-center border-b border-[#d4d4d4] pt-2 pl-1 text-[#8c8c8c]">
      <div className="relative">
        <Search size={14} strokeWidth={3} className="absolute top-2 left-[10px] z-10 text-[#6f6f6f]" />
        <Select label="选取滤镜类型" className="w-[108px]" selectClass="pl-7 text-[#9a9a9a]">
          <option>类型</option>
          <option>名称</option>
        </Select>
      </div>
      <div className="ml-[13px] flex">
        {FILTERS.map((filter) => (
          <button key={filter.name} aria-label={filter.name} className="flex w-[30px] justify-center">{filter.icon}</button>
        ))}
      </div>
      <button aria-label="打开或关闭图层过滤" className="ml-[13px] h-[22px] w-3 rounded-full bg-[#f9f9f9]">
        <span className="block h-[11px] w-[11px] -translate-y-[6px] rounded-full bg-[#8c8c8c]" />
      </button>
    </div>
    <div className="flex h-9 shrink-0 items-center gap-[6px] border-b border-[#d4d4d4] pr-14 pl-1">
      <Select label="混合模式" className="w-[147px]" selectClass="pl-[10px] text-[#9a9a9a]">
        <option>正常</option>
        <option>溶解</option>
      </Select>
      <PercentField id="opacity" label="不透明度:" />
    </div>
    <div className="flex h-[39px] shrink-0 items-center gap-[6px] pr-14 pb-1 pl-2">
      <span className="text-[15px] whitespace-nowrap text-[#9a9a9a]">锁定:</span>
      <div className="flex text-[#8c8c8c]">
        {LOCKS.map((lock) => (
          <button key={lock.name} aria-label={lock.name} className="flex w-7 justify-center">{lock.icon}</button>
        ))}
      </div>
      <PercentField id="fill" label="填充:" />
    </div>
    <div className="flex min-h-0 flex-1 border-b border-[#cdcdcd]">
      <div className="flex-1 bg-[#e7e7e7]">
        <div className="flex h-[51px] border-b border-[#d9d9d9] bg-[#f0f0f0]">
          <button aria-label="指示图层可见性" className="flex w-[37px] items-center justify-center text-[#262626]">
            <Icon size={18}>
              <path d="M1 12c5-9.500 17-9.500 22 0-5 9.500-17 9.500-22 0z" fill="currentColor" stroke="none" />
              <circle cx="12" cy="12" r="4.600" fill="#f0f0f0" stroke="none" />
              <circle cx="12" cy="12" r="2.500" fill="currentColor" stroke="none" />
            </Icon>
          </button>
          <div className="flex flex-1 items-center bg-[#b3b3b3] pr-4 pl-[5px] text-[15px] text-[#262626]">
            <span className="mr-3 h-10 w-10 border border-[#333] bg-white" />
            背景
            <button aria-label="图层锁定" className="ml-auto">
              <Icon size={20}>
                <path d="M4.500 10.500h15V20h-15zM8 10V7.500c0-5 8-5 8 0V10" strokeWidth="2" />
                <circle cx="12" cy="15.500" r="1.800" fill="currentColor" stroke="none" />
              </Icon>
            </button>
          </div>
        </div>
      </div>
      <div className="w-5 bg-[#e1e1e1]" />
    </div>
    <div className="relative flex h-[31px] shrink-0 items-center justify-end pr-[25px] text-[#262626]">
      {LAYER_ACTIONS.map((action) => (
        <button
          key={action.name}
          aria-label={action.name}
          className={clsx("flex w-[34px] justify-center", action.muted && "text-[#969696]")}
        >
          {action.icon}
        </button>
      ))}
      <span className="absolute right-2 bottom-0 text-[12px] leading-4 whitespace-nowrap text-[#777]">CSDN @cacrle</span>
    </div>
  </section>
);

export default function App() {
  return (
    <div className="flex h-screen flex-col overflow-hidden rounded-t-[6px] border border-[#c4c4c4] bg-[#f0f0f0] px-1 pb-1 font-['Noto_Sans','Noto_Sans_CJK_SC',sans-serif]">
      <TitleBar />
      <div className="flex min-h-0 flex-1 flex-col border border-t-0 border-[#c8c8c8]">
        <OptionsBar />
        <div className="flex min-h-0 flex-1 bg-[#f0f0f0]">
          <Toolbar />
          <DocumentWindow />
          <div className="ml-[2px] flex w-[406px] shrink-0 flex-col">
            <div className="flex h-[15px] shrink-0 items-center justify-between border-b border-l border-[#cdcdcd] bg-[#dbdbdb] pr-[5px] pl-7 text-[#2e2e2e]">
              <ChevronsLeft size={13} strokeWidth={3} />
              <ChevronsRight size={13} strokeWidth={3} />
            </div>
            <div className="flex min-h-0 flex-1">
              <Dock />
              <div className="ml-[2px] flex min-w-0 flex-1 flex-col border-l border-[#c8c8c8]">
                <ColorPanel />
                <PropertiesPanel />
                <LayersPanel />
              </div>
            </div>
          </div>
        </div>
      </div>
    </div>
  );
}
